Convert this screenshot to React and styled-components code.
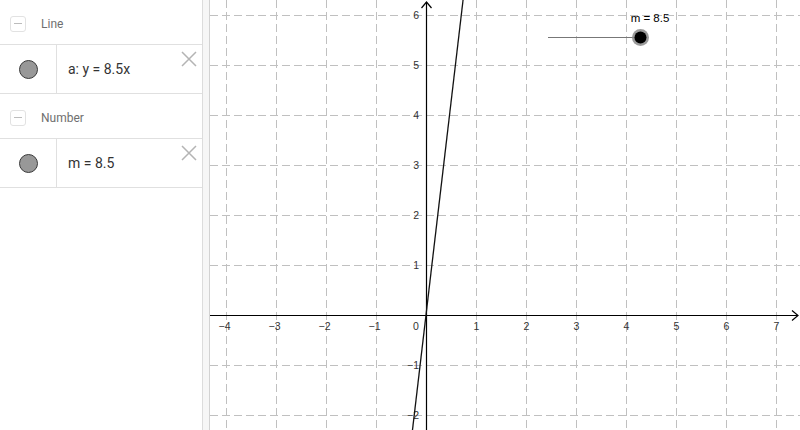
import React from "react";
import styled, { createGlobalStyle } from "styled-components";

const Global = createGlobalStyle`
  html, body { margin: 0; padding: 0; background: #fff; }
  body { font-family: Roboto, "Noto Sans", sans-serif; }
`;

const Page = styled.div`
  display: flex;
  width: 800px;
  height: 430px;
  overflow: hidden;
  background: #fff;
`;

const Panel = styled.div`
  width: 202px;
  flex: none;
  border-right: 1px solid #dcdcdc;
  display: flex;
  flex-direction: column;
  background: #fff;
`;

const Strip = styled.div`
  width: 6px;
  flex: none;
  background: #f6f6f6;
  border-right: 1px solid #d2d2d2;
`;

const Graph = styled.div`
  flex: 1;
  position: relative;
  background: #fff;
`;

const GroupHeader = styled.div`
  height: ${(p) => p.$h}px;
  display: flex;
  align-items: center;
  padding-left: 10px;
  padding-top: 3px;
  gap: 15px;
  border-bottom: 1px solid #e0e0e0;
  box-sizing: border-box;
`;

const Toggle = styled.span`
  width: 14px;
  height: 14px;
  border: 1px solid #e2e2e2;
  border-radius: 3px;
  display: flex;
  align-items: center;
  justify-content: center;
  &::after {
    content: "";
    width: 8px;
    height: 1.5px;
    background: #bcbcbc;
  }
`;

const GroupTitle = styled.span`
  font-size: 12px;
  color: #6f6f6f;
`;

const Item = styled.div`
  height: 49px;
  display: flex;
  position: relative;
  border-bottom: 1px solid #e0e0e0;
  box-sizing: border-box;
`;

const Marble = styled.div`
  width: 56px;
  flex: none;
  border-right: 1px solid #e0e0e0;
  display: flex;
  align-items: center;
  justify-content: center;
  &::before {
    content: "";
    width: 17px;
    height: 17px;
    border-radius: 50%;
    background: #989898;
    border: 1px solid #3a3a3a;
    margin-left: 1px;
  }
`;

const Formula = styled.div`
  display: flex;
  align-items: center;
  padding-left: 11px;
  font-size: 14px;
  color: #333;
  font-family: Roboto, sans-serif;
  white-space: pre;
`;

const Close = styled.button`
  position: absolute;
  top: 6px;
  right: 5px;
  width: 16px;
  height: 16px;
  padding: 0;
  border: 0;
  background: none;
  display: block;
`;

const CloseIcon = () => (
  <svg width="16" height="16" viewBox="0 0 16 16">
    <path d="M1 1 L15 15 M15 1 L1 15" stroke="#b4b4b4" strokeWidth="1.5" fill="none" />
  </svg>
);

const GraphSvg = styled.svg`
  display: block;
  font-family: "Liberation Sans", Arial, sans-serif;
`;

const OX = 216;
const OY = 315;
const U = 50;

function Plot() {
  const xs = [-4, -3, -2, -1, 1, 2, 3, 4, 5, 6, 7];
  const ys = [6, 5, 4, 3, 2, 1, -1, -2];
  const lineX = (yv) => OX + (yv / 8.5) * U;
  const topY = OY / U;
  const botY = -(430 - OY) / U;
  return (
    <GraphSvg width="590" height="430" viewBox="0 0 590 430">
      <g stroke="#c0c0c0" strokeWidth="1" strokeDasharray="8 4">
        {xs.map((k) => (
          <line key={"v" + k} x1={OX + k * U + 0.5} y1="0" x2={OX + k * U + 0.5} y2="430" />
        ))}
        {ys.map((k) => (
          <line key={"h" + k} x1="0" y1={OY - k * U + 0.5} x2="590" y2={OY - k * U + 0.5} />
        ))}
      </g>
      <g stroke="#000" strokeWidth="1.2" fill="none">
        <line x1="0" y1={OY + 0.5} x2="588" y2={OY + 0.5} />
        <path d={`M582 ${OY - 4.5} L588 ${OY + 0.5} L582 ${OY + 5.5}`} />
        <line x1={OX + 0.5} y1="2" x2={OX + 0.5} y2="430" />
        <path d={`M${OX - 4.5} 8 L${OX + 0.5} 2 L${OX + 5.5} 8`} />
      </g>
      <g fill="#333" fontSize="10.5" textAnchor="middle">
        {xs.map((k) => (
          <text key={"tx" + k} x={OX + k * U + (k < 0 ? -1.5 : 0.5)} y={OY + 15}>
            {k < 0 ? "\u2212" + -k : k}
          </text>
        ))}
        <text x={OX - 10} y={OY + 15}>0</text>
      </g>
      <g fill="#333" fontSize="10.5" textAnchor="end">
        {ys.map((k) => (
          <text key={"ty" + k} x={OX - 7} y={OY - k * U + 4}>
            {k < 0 ? "\u2212" + -k : k}
          </text>
        ))}
      </g>
      <line
        x1={lineX(topY)}
        y1="0"
        x2={lineX(botY)}
        y2="430"
        stroke="#111"
        strokeWidth="1.3"
      />
      <line x1="338" y1="37.5" x2="430" y2="37.5" stroke="#777" strokeWidth="1" />
      <circle cx="430.5" cy="37.5" r="8.5" fill="#8a8a8a" opacity="0.85" />
      <circle cx="430.5" cy="37.5" r="6" fill="#000" />
      <text x="440" y="22" fontSize="11.5" textAnchor="middle" fill="#000">m = 8.5</text>
    </GraphSvg>
  );
}

const groups = [
  { title: "Line", formula: "a: y = 8.5x", h: 45 },
  { title: "Number", formula: "m = 8.5", h: 45 },
];

export default function App() {
  return (
    <>
      <Global />
      <Page>
        <Panel>
          {groups.map((g) => (
            <React.Fragment key={g.title}>
              <GroupHeader $h={g.h}>
                <Toggle />
                <GroupTitle>{g.title}</GroupTitle>
              </GroupHeader>
              <Item>
                <Marble />
                <Formula>{g.formula}</Formula>
                <Close aria-label="delete">
                  <CloseIcon />
                </Close>
              </Item>
            </React.Fragment>
          ))}
        </Panel>
        <Strip />
        <Graph>
          <Plot />
        </Graph>
      </Page>
    </>
  );
}
